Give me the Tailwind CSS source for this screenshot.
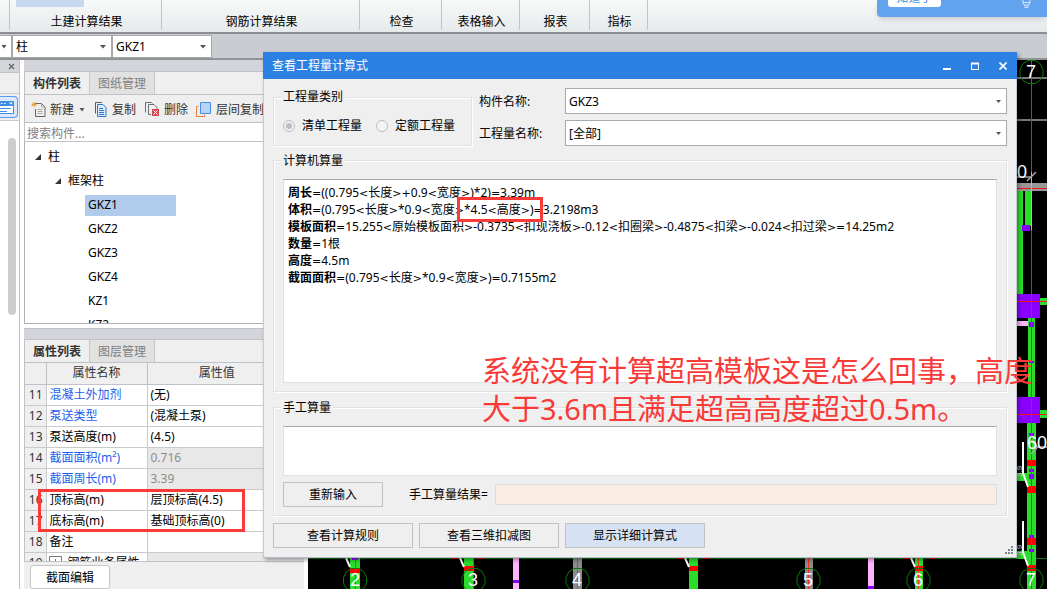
<!DOCTYPE html>
<html lang="zh-CN">
<head>
<meta charset="utf-8">
<title>查看工程量计算式</title>
<script src="https://cdn.jsdelivr.net/npm/@tailwindcss/browser@4"></script>
</head>
<body class="font-['Noto_Sans','Noto_Sans_CJK_SC',sans-serif] text-[12px] leading-[16px] text-black">
<div class="relative flex h-screen flex-col overflow-hidden bg-[#c9ccd1]">

  <!-- Ribbon -->
  <nav class="relative flex h-[34px] shrink-0 border-b-2 border-[#8b8e93] bg-linear-to-b from-[#f8fafa] to-[#e6eaea] pb-[2px]">
    <div class="w-[10px] border-r border-[#c4c4c4]"></div>
    <div class="relative flex w-[152px] items-end justify-center border-r border-[#c4c4c4] pl-[2px]"><span class="absolute top-0 left-[6px] h-[7px] w-[68px] bg-[#c8d8f0]"></span>土建计算结果</div>
    <div class="flex w-[198px] items-end justify-center border-r border-[#c4c4c4] pl-[2px]">钢筋计算结果</div>
    <div class="flex w-[82px] items-end justify-center border-r border-[#c4c4c4] pl-[2px]">检查</div>
    <div class="flex w-[78px] items-end justify-center border-r border-[#c4c4c4] pl-[2px]">表格输入</div>
    <div class="flex w-[70px] items-end justify-center border-r border-[#c4c4c4] pl-[2px]">报表</div>
    <div class="flex w-[58px] items-end justify-center border-r border-[#c4c4c4] pl-[2px]">指标</div>
  </nav>

  <!-- Floor / component selectors -->
  <div class="flex h-[26px] shrink-0 items-center border-b-2 border-[#8f9297]">
    <div class="relative h-[23px] w-[12px] border border-l-0 border-[#a8a8a8] bg-white">
      <svg class="absolute top-[9px] left-[1px] h-[4px] w-[7px]" viewBox="0 0 7 4"><path d="M0.5 0h5L3 3.5z" fill="#555"/></svg>
    </div>
    <div class="relative h-[23px] w-[100px]">
      <select aria-label="构件类别" class="size-full appearance-none border border-[#a8a8a8] bg-white pt-[2px] pl-[3px]"><option>柱</option></select>
      <svg class="pointer-events-none absolute top-[10px] right-[6px] h-[4px] w-[6px]" viewBox="0 0 6 4"><path d="M0 0h6L3 3.5z" fill="#555"/></svg>
    </div>
    <div class="relative h-[23px] w-[100px]">
      <select aria-label="构件" class="size-full appearance-none border border-[#a8a8a8] bg-white pt-[2px] pl-[3px]"><option>GKZ1</option></select>
      <svg class="pointer-events-none absolute top-[10px] right-[6px] h-[4px] w-[6px]" viewBox="0 0 6 4"><path d="M0 0h6L3 3.5z" fill="#555"/></svg>
    </div>
  </div>

  <main class="flex min-h-0 flex-1">
    <!-- Collapsed navigation -->
    <aside class="flex w-[20px] shrink-0 flex-col border-r border-[#bfc1c6] bg-white">
      <div class="flex h-[13px] items-center justify-end border-b border-[#c2c4c9] bg-[#d3d5da] pr-[4px]">
        <button aria-label="关闭" class="flex"><svg class="size-[7px]" viewBox="0 0 7 7"><path d="M1 1l5 5M6 1L1 6" stroke="#666" stroke-width="1.3"/></svg></button>
      </div>
      <div class="h-[21px] border-b border-[#c8cacc] bg-[#efefef]"></div>
      <div class="h-[27px] border-b border-[#c8cacc] bg-[#efefef] pt-[2px]">
        <button aria-label="模块导航" class="block h-[22px] w-[18px] rounded-r-[4px] border border-l-0 border-[#5a9ae8] bg-[#d9e8fa]">
          <svg class="h-[20px] w-[17px]" viewBox="0 0 17 20"><path d="M-2 4.500h15.500v12h-15.500z" fill="#fff" stroke="#3f8de6"/><path d="M-2 4h16v5h-16z" fill="#3f8de6"/><path d="M1 6h1.500v1h-1.500zM4 6h1.500v1h-1.500zM9 5.500h4l-2 2z" fill="#fff"/><path d="M0 11.500h11M0 14.500h7" stroke="#3f8de6"/></svg>
        </button>
      </div>
      <div class="mt-[17px] ml-[8px] h-[177px] w-[8px] rounded-full bg-[#cdcdcd]"></div>
    </aside>

    <!-- Docked panels -->
    <section class="flex w-[288px] shrink-0 flex-col border-x-4 border-white bg-[#efefef]">
      <div class="h-[12px] shrink-0 border-b border-[#bfc2c8] bg-[#d3d5da]"></div>
      <div class="flex h-[23px] shrink-0 border-b border-l border-[#bfc2c8]">
        <button class="w-[65px] border-r border-[#c4c6ca] pt-[2px] font-bold text-[#333]">构件列表</button>
        <button class="w-[65px] border-r border-[#c4c6ca] bg-[#e1e1e1] pt-[2px] text-[#808080]">图纸管理</button>
      </div>
      <div class="flex h-[28px] shrink-0 items-center border-b border-l border-[#bfc2c8] pt-[2px] pl-[6px] whitespace-nowrap text-[#333]">
        <button class="flex items-center gap-[4px]">
          <svg class="h-[16px] w-[15px]" viewBox="0 0 15 16"><path d="M4 1.500h6.500l3.500 3.500v9.500h-9.500V7" fill="none" stroke="#666"/><path d="M10.500 1.500v3.500H14M6.500 7.500h5M6.500 9.500h5M6.500 11.500h5" fill="none" stroke="#aaa"/><path d="M3 0v5M0.500 2.500h5M1 0.500l4 4M5 0.500l-4 4" stroke="#f0a028"/></svg>新建</button>
        <svg class="ml-[5px] h-[4px] w-[7px]" viewBox="0 0 7 4"><path d="M0.500 0h5L3 3.500z" fill="#555"/></svg>
        <button class="ml-[8px] flex items-center gap-[5px]">
          <svg class="h-[16px] w-[13px]" viewBox="0 0 13 16"><path d="M1.500 11.500v-11H8" fill="none" stroke="#555e68"/><path d="M3.500 2.500h5.500l3 3v9h-8.500z" fill="#dcebfb" stroke="#2f78c8"/><path d="M5 6.500h4M5 8.500h5M5 10.500h5M5 12.500h5" stroke="#2f78c8"/></svg>复制</button>
        <button class="ml-[9px] flex items-center gap-[5px]">
          <svg class="h-[16px] w-[14px]" viewBox="0 0 14 16"><path d="M0.500 10.500v-10h6l1 1" fill="none" stroke="#666e78"/><path d="M6 12.500H3.500v-10H9l3 3V7" fill="none" stroke="#666e78"/><path d="M7 7h7v7H7z" fill="#d9494f"/><path d="M8.500 8.500l4 4M12.500 8.500l-4 4" stroke="#fff"/></svg>删除</button>
        <button class="ml-[8px] flex items-center gap-[5px]">
          <svg class="h-[16px] w-[15px]" viewBox="0 0 15 16"><path d="M2.500 4.500H0.500v10h8v-2" fill="none" stroke="#e8813a"/><path d="M4.500 0.500h10v11h-10z" fill="#b6d3f9" stroke="#4a8ce0"/></svg>层间复制</button>
      </div>
      <input type="search" aria-label="搜索构件" placeholder="搜索构件..." class="h-[19px] shrink-0 border-b border-l border-[#bfc2c8] bg-white pt-[2px] pl-[2px] placeholder:text-[#808080]">
      <ul class="h-[182px] shrink-0 overflow-hidden border-b border-l border-[#aeb0b3] bg-white pt-[3px]">
        <li class="flex h-[24px] items-center gap-[7px] pl-[10px]"><svg class="size-[6px]" viewBox="0 0 6 6"><path d="M6 0v6H0z" fill="#333"/></svg>柱</li>
        <li class="flex h-[24px] items-center gap-[7px] pl-[30px]"><svg class="size-[6px]" viewBox="0 0 6 6"><path d="M6 0v6H0z" fill="#333"/></svg>框架柱</li>
        <li class="flex h-[24px] items-center pl-[60px]"><span class="h-[21px] w-[91px] bg-[#b1cbed] pl-[3px] leading-[20px]">GKZ1</span></li>
        <li class="h-[24px] pl-[63px] leading-[24px]">GKZ2</li>
        <li class="h-[24px] pl-[63px] leading-[24px]">GKZ3</li>
        <li class="h-[24px] pl-[63px] leading-[24px]">GKZ4</li>
        <li class="h-[24px] pl-[63px] leading-[24px]">KZ1</li>
        <li class="h-[24px] pl-[63px] leading-[24px]">KZ2</li>
      </ul>
      <div class="h-[4px] shrink-0 bg-white"></div>
      <div class="h-[12px] shrink-0 border-y border-[#bfc2c8] bg-[#d3d5da]"></div>
      <div class="flex h-[22px] shrink-0 border-l border-[#bfc2c8]">
        <button class="w-[65px] border-r border-[#c4c6ca] pt-[2px] font-bold text-[#333]">属性列表</button>
        <button class="w-[65px] border-r border-[#c4c6ca] bg-[#e1e1e1] pt-[2px] text-[#808080]">图层管理</button>
      </div>
      <div class="h-[200px] shrink-0 overflow-hidden border-y border-l border-[#bfc2c8]">
        <table class="w-full table-fixed border-collapse">
          <colgroup><col class="w-[21px]"><col class="w-[101px]"><col></colgroup>
          <thead>
            <tr class="h-[21px] text-[#333]"><th class="border-r border-b border-[#bfc2c8] p-0"></th><th class="border-r border-b border-[#bfc2c8] p-0 font-normal">属性名称</th><th class="border-b border-[#bfc2c8] p-0 pr-[18px] font-normal">属性值</th></tr>
          </thead>
          <tbody>
            <tr class="h-[21px]"><td class="border-r border-b border-[#c8cacc] p-0 pr-[3px] text-right text-[#333]">11</td><td class="border-r border-b border-[#c8cacc] bg-white p-0 pl-[3px] text-[#1b5ef0]">混凝土外加剂</td><td class="border-b border-[#c8cacc] bg-white p-0 pl-[3px]">(无)</td></tr>
            <tr class="h-[21px]"><td class="border-r border-b border-[#c8cacc] p-0 pr-[3px] text-right text-[#333]">12</td><td class="border-r border-b border-[#c8cacc] bg-white p-0 pl-[3px] text-[#1b5ef0]">泵送类型</td><td class="border-b border-[#c8cacc] bg-white p-0 pl-[3px]">(混凝土泵)</td></tr>
            <tr class="h-[21px]"><td class="border-r border-b border-[#c8cacc] p-0 pr-[3px] text-right text-[#333]">13</td><td class="border-r border-b border-[#c8cacc] bg-white p-0 pl-[3px]">泵送高度(m)</td><td class="border-b border-[#c8cacc] bg-white p-0 pl-[3px]">(4.5)</td></tr>
            <tr class="h-[21px]"><td class="border-r border-b border-[#c8cacc] p-0 pr-[3px] text-right text-[#333]">14</td><td class="border-r border-b border-[#c8cacc] bg-white p-0 pl-[3px] text-[#1b5ef0]">截面面积(m²)</td><td class="border-b border-[#c8cacc] bg-[#e8e8e8] p-0 pl-[3px] text-[#8c8c8c]">0.716</td></tr>
            <tr class="h-[21px]"><td class="border-r border-b border-[#c8cacc] p-0 pr-[3px] text-right text-[#333]">15</td><td class="border-r border-b border-[#c8cacc] bg-white p-0 pl-[3px] text-[#1b5ef0]">截面周长(m)</td><td class="border-b border-[#c8cacc] bg-[#e8e8e8] p-0 pl-[3px] text-[#8c8c8c]">3.39</td></tr>
            <tr class="h-[21px]"><td class="border-r border-b border-[#c8cacc] p-0 pr-[3px] text-right text-[#333]">16</td><td class="border-r border-b border-[#c8cacc] bg-white p-0 pl-[3px]">顶标高(m)</td><td class="border-b border-[#c8cacc] bg-white p-0 pl-[3px]">层顶标高(4.5)</td></tr>
            <tr class="h-[21px]"><td class="border-r border-b border-[#c8cacc] p-0 pr-[3px] text-right text-[#333]">17</td><td class="border-r border-b border-[#c8cacc] bg-white p-0 pl-[3px]">底标高(m)</td><td class="border-b border-[#c8cacc] bg-white p-0 pl-[3px]">基础顶标高(0)</td></tr>
            <tr class="h-[21px]"><td class="border-r border-b border-[#c8cacc] p-0 pr-[3px] text-right text-[#333]">18</td><td class="border-r border-b border-[#c8cacc] bg-white p-0 pl-[3px]">备注</td><td class="border-b border-[#c8cacc] bg-white p-0"></td></tr>
            <tr class="h-[21px]"><td class="border-r border-[#c8cacc] p-0 pr-[3px] text-right text-[#333]">19</td><td class="border-r border-[#c8cacc] bg-white p-0 pl-[2px]"><span class="flex items-center gap-[6px] whitespace-nowrap"><svg class="size-[13px]" viewBox="0 0 13 13"><path d="M0.500 0.500h12v12H0.500zM3 6.500h7M6.500 3v7" fill="none" stroke="#777"/></svg>钢筋业务属性</span></td><td class="bg-[#e8e8e8] p-0"></td></tr>
          </tbody>
        </table>
      </div>
      <div class="pt-[3px] pl-[6px]"><button class="h-[24px] w-[80px] rounded-[3px] border border-[#c6c6c6] bg-white pt-[2px]">截面编辑</button></div>
    </section>

    <!-- Model view -->
    <div class="min-w-0 flex-1 overflow-hidden bg-black">
      <svg class="size-full" viewBox="308 60 739 529" preserveAspectRatio="xMaxYMin slice" font-family="Liberation Sans, sans-serif">
        <g shape-rendering="crispEdges">
          <path d="M308 558h739" stroke="#0a7a0a"/>
          <path d="M350 558h10v31h-10zM464 558h9v31h-9zM689 558h9v31h-9zM915 558h8v31h-8z" fill="#2bdc2b"/>
          <path d="M573 558h9v31h-9zM805 558h8v31h-8z" fill="#8c8c8c"/>
          <path d="M513 558h6v31h-6zM868 558h6v31h-6z" fill="#ffb4ff"/>
          <path d="M513 580h6v3h-6zM868 586h6v3h-6zM352 558h6v2h-6z" fill="#8a00ff"/>
          <path d="M350 568h10v5h-10zM464 566h9v5h-9zM689 566h9v5h-9zM915 566h8v5h-8zM451 557h6v2h-6zM478 557h6v2h-6zM677 557h6v2h-6zM703 557h6v2h-6zM903 557h6v2h-6zM929 557h6v2h-6z" fill="#f00"/>
          <path d="M355.500 558v31M473.500 558v31M577.500 558v31M808.500 558v31M918.500 558v31" stroke="#f03020"/>
          <path d="M1017 78h30M1017 120h30M1017 177h14" stroke="#777" stroke-width="2"/>
          <path d="M1017 183h30v8h-30z" fill="#9a9696"/>
          <path d="M1017 188.500h30" stroke="#e02020"/>
          <path d="M1017 191h6v103h-6zM1025 191h6v35h-6zM1028 317h7v80h-7zM1040 298h7v7h-7zM1040 410h7v8h-7zM1017 473h11v8h-11zM1017 551h11v8h-11zM1027 422h9v167h-9z" fill="#2bdc2b"/>
          <path d="M1017 294h23v24h-23zM1017 397h23v26h-23zM1022 225h8v6h-8zM1029 322h5v5h-5zM1029 361h5v2h-5zM1029 433h5v3h-5zM1029 469h5v3h-5zM1029 474h5v5h-5zM1029 535h5v3h-5zM1029 549h5v3h-5z" fill="#8a00ff"/>
          <path d="M1017 321h11v5h-11z" fill="#ffb4ff"/>
          <path d="M1027 460h9v6h-9zM1027 486h9v7h-9zM1027 538h9v7h-9zM1027 565h9v6h-9z" fill="#f00"/>
          <path d="M1031.500 60v529M1017 301.500h30M1017 414.500h30" stroke="#f01818"/>
          <path d="M1031.500 172v58" stroke="#bbb"/>
        </g>
        <path d="M346 558l4 9M460 558l4 9M685 558l4 9M911 558l4 9M1023 442v31l5 14M1023 521v31l5 14" fill="none" stroke="#fff" stroke-width="2"/>
        <path d="M1027 181l9-9M1031 454l6-6M1031 440l6 6M1036 447h11" stroke="#aaa" stroke-width="1.500"/>
        <g fill="none" stroke="#0a7a0a">
          <path id="bubble" d="M1028 60.500h7l5 3 3 6v6l-3 5-5 3h-7l-5-3-3-5v-6l3-6z"/>
          <use href="#bubble" x="-676.500" y="508"/><use href="#bubble" x="-558" y="508"/><use href="#bubble" x="-454" y="508"/><use href="#bubble" x="-223" y="508"/><use href="#bubble" x="-113" y="508"/><use href="#bubble" y="508"/>
        </g>
        <g fill="#fff" font-size="18" text-anchor="middle">
          <text x="1031" y="78">7</text><text x="355" y="586">2</text><text x="473" y="586">3</text><text x="577" y="586">4</text><text x="808" y="586">5</text><text x="918" y="586">6</text><text x="1031" y="586">7</text><text x="1022" y="178">0</text><text x="1037" y="449">60</text>
        </g>
        <g fill="#ddd" font-size="8"><text transform="translate(1022 477) rotate(-90)">3.9</text><text transform="translate(1022 556) rotate(-90)">3.9</text></g>
      </svg>
    </div>
  </main>

  <!-- Notification -->
  <div class="absolute top-0 right-0 h-[17px] w-[170px] rounded-bl-[4px] bg-[#62a3ee] shadow-md">
    <button class="absolute top-[-12px] left-[11px] h-[19px] w-[53px] rounded-[3px] bg-white text-[12px] text-[#4a90e2]">知道了</button>
    <svg class="absolute top-0 left-[145px] h-[9px] w-[9px]" viewBox="0 0 9 9"><path d="M1 0v3l1.500 2h4L8 3V0M3 5v2.500h3V5M1 2.500h7" fill="none" stroke="#d5e6fb"/></svg>
  </div>

  <!-- Quantity expression dialog -->
  <section role="dialog" aria-labelledby="dialog-title" class="absolute top-[52px] right-[30px] left-[263px] border-b border-[#b4bccb] bg-[#efefef] shadow-[2px_2px_4px_rgba(0,0,0,0.35)]">
    <header class="flex h-[27px] items-center justify-between bg-[#2c80e2] pr-[10px] pl-[9px] text-white">
      <h1 id="dialog-title">查看工程量计算式</h1>
      <div class="flex gap-[20px]">
        <button aria-label="最小化"><svg class="size-[8px]" viewBox="0 0 8 8"><path d="M0 6h8v2H0z" fill="#fff"/></svg></button>
        <button aria-label="最大化"><svg class="size-[8px]" viewBox="0 0 8 8"><path d="M0.500 1.500h7v6h-7zM0 1.500h8" fill="none" stroke="#fff"/><path d="M0 0.500h8v2H0z" fill="#fff"/></svg></button>
        <button aria-label="关闭"><svg class="size-[8px]" viewBox="0 0 8 8"><path d="M0.500 0.500l7 7M7.500 0.500l-7 7" stroke="#fff" stroke-width="1.700"/></svg></button>
      </div>
    </header>
    <div class="border-x border-[#c5cbd6] px-[9px] pb-[9px]">
      <div class="flex gap-[7px] pt-[9px]">
        <fieldset class="relative mt-[9px] flex h-[49px] w-[199px] items-center gap-[14px] border border-[#e1e1e1] pt-[8px] pl-[9px] shadow-[inset_1px_1px_0_#fff,1px_1px_0_#fff]">
          <legend class="absolute top-[-9px] left-[7px] bg-[#efefef] px-[2px]">工程量类别</legend>
          <label class="flex items-center gap-[7px]"><input type="radio" name="kind" checked class="size-[12px] appearance-none rounded-full border border-[#bdbdbd] bg-[#f4f4f4] bg-clip-content p-[2px] checked:bg-[#bdbdbd]">清单工程量</label>
          <label class="flex items-center gap-[7px]"><input type="radio" name="kind" class="size-[12px] appearance-none rounded-full border border-[#bdbdbd] bg-[#f4f4f4]">定额工程量</label>
        </fieldset>
        <div class="grid flex-1 grid-cols-[86px_1fr] items-center gap-y-[6px]">
          <label for="component" class="pt-[2px]">构件名称:</label>
          <div class="relative"><select id="component" class="block h-[26px] w-full appearance-none border border-[#a9a9a9] bg-white pt-[2px] pl-[3px]"><option>GKZ3</option></select><svg class="pointer-events-none absolute top-[12px] right-[6px] h-[3px] w-[5px]" viewBox="0 0 5 3"><path d="M0 0h5L2.500 3z" fill="#555"/></svg></div>
          <label for="quantity" class="pt-[2px]">工程量名称:</label>
          <div class="relative"><select id="quantity" class="block h-[26px] w-full appearance-none border border-[#a9a9a9] bg-white pt-[2px] pl-[3px]"><option>[全部]</option></select><svg class="pointer-events-none absolute top-[12px] right-[6px] h-[3px] w-[5px]" viewBox="0 0 5 3"><path d="M0 0h5L2.500 3z" fill="#555"/></svg></div>
        </div>
      </div>

      <fieldset class="relative mt-[14px] border border-[#e1e1e1] px-[9px] pt-[18px] pb-[8px] shadow-[inset_1px_1px_0_#fff,1px_1px_0_#fff]">
        <legend class="absolute top-[-8px] left-[7px] bg-[#efefef] px-[2px]">计算机算量</legend>
        <div role="textbox" aria-readonly="true" aria-multiline="true" aria-label="计算机算量" class="h-[204px] border border-t-[#a9a9a9] border-r-[#dde1e8] border-b-[#dde1e8] border-l-[#dde1e8] bg-white px-[4px] pt-[4px] leading-[17px] whitespace-nowrap [&_i]:font-['DejaVu_Sans',sans-serif] [&_i]:text-[11px] [&_i]:leading-none [&_i]:not-italic">
          <p><b>周长</b><i>=</i>((0.795<i>&lt;</i>长度<i>&gt;+</i>0.9<i>&lt;</i>宽度<i>&gt;</i>)*2)<i>=</i>3.39m</p>
          <p><b>体积</b><i>=</i>(0.795<i>&lt;</i>长度<i>&gt;</i>*0.9<i>&lt;</i>宽度<i>&gt;</i>*4.5<i>&lt;</i>高度<i>&gt;</i>)<i>=</i>3.2198m3</p>
          <p><b>模板面积</b><i>=</i>15.255<i>&lt;</i>原始模板面积<i>&gt;</i>-0.3735<i>&lt;</i>扣现浇板<i>&gt;</i>-0.12<i>&lt;</i>扣圈梁<i>&gt;</i>-0.4875<i>&lt;</i>扣梁<i>&gt;</i>-0.024<i>&lt;</i>扣过梁<i>&gt;=</i>14.25m2</p>
          <p><b>数量</b><i>=</i>1根</p>
          <p><b>高度</b><i>=</i>4.5m</p>
          <p><b>截面面积</b><i>=</i>(0.795<i>&lt;</i>长度<i>&gt;</i>*0.9<i>&lt;</i>宽度<i>&gt;</i>)<i>=</i>0.7155m2</p>
        </div>
      </fieldset>

      <fieldset class="relative mt-[15px] border border-[#e1e1e1] px-[9px] pt-[18px] pb-[8px] shadow-[inset_1px_1px_0_#fff,1px_1px_0_#fff]">
        <legend class="absolute top-[-8px] left-[7px] bg-[#efefef] px-[2px]">手工算量</legend>
        <textarea aria-label="手工算量" class="block h-[50px] w-full resize-none border border-t-[#a9a9a9] border-r-[#dde1e8] border-b-[#dde1e8] border-l-[#dde1e8] bg-white"></textarea>
        <div class="mt-[6px] flex items-center">
          <button class="h-[25px] w-[100px] border border-[#c2c2c2]">重新输入</button>
          <label for="result" class="w-[112px] pl-[26px]">手工算量结果=</label>
          <input id="result" class="h-[21px] min-w-0 flex-1 border border-[#dcdcdc] bg-[#faeee4]">
        </div>
      </fieldset>

      <div class="mt-[7px] flex gap-[6px]">
        <button class="h-[25px] w-[140px] border border-[#c2c2c2]">查看计算规则</button>
        <button class="h-[25px] w-[140px] border border-[#c2c2c2]">查看三维扣减图</button>
        <button class="h-[25px] w-[140px] border border-[#c2c2c2] bg-[#d6e2f3]">显示详细计算式</button>
      </div>
    </div>
    <svg class="absolute right-[4px] bottom-[3px] size-[8px]" viewBox="0 0 8 8"><path d="M6 0h2v2H6zM3 3h2v2H3zM6 3h2v2H6zM0 6h2v2H0zM3 6h2v2H3zM6 6h2v2H6z" fill="#7d8290"/></svg>
  </section>

  <!-- Review annotations -->
  <div class="absolute top-[197px] left-[457px] h-[25px] w-[86px] border-3 border-[#f93a37]"></div>
  <div class="absolute top-[489px] left-[38px] h-[43px] w-[207px] border-3 border-[#f93a37]"></div>
  <p class="absolute top-[352px] left-[482px] text-[29px] leading-[38px] whitespace-nowrap text-[#f93a37]">系统没有计算超高模板这是怎么回事，高度<br>大于3.6m且满足超高高度超过0.5m。</p>
</div>
</body>
</html>
